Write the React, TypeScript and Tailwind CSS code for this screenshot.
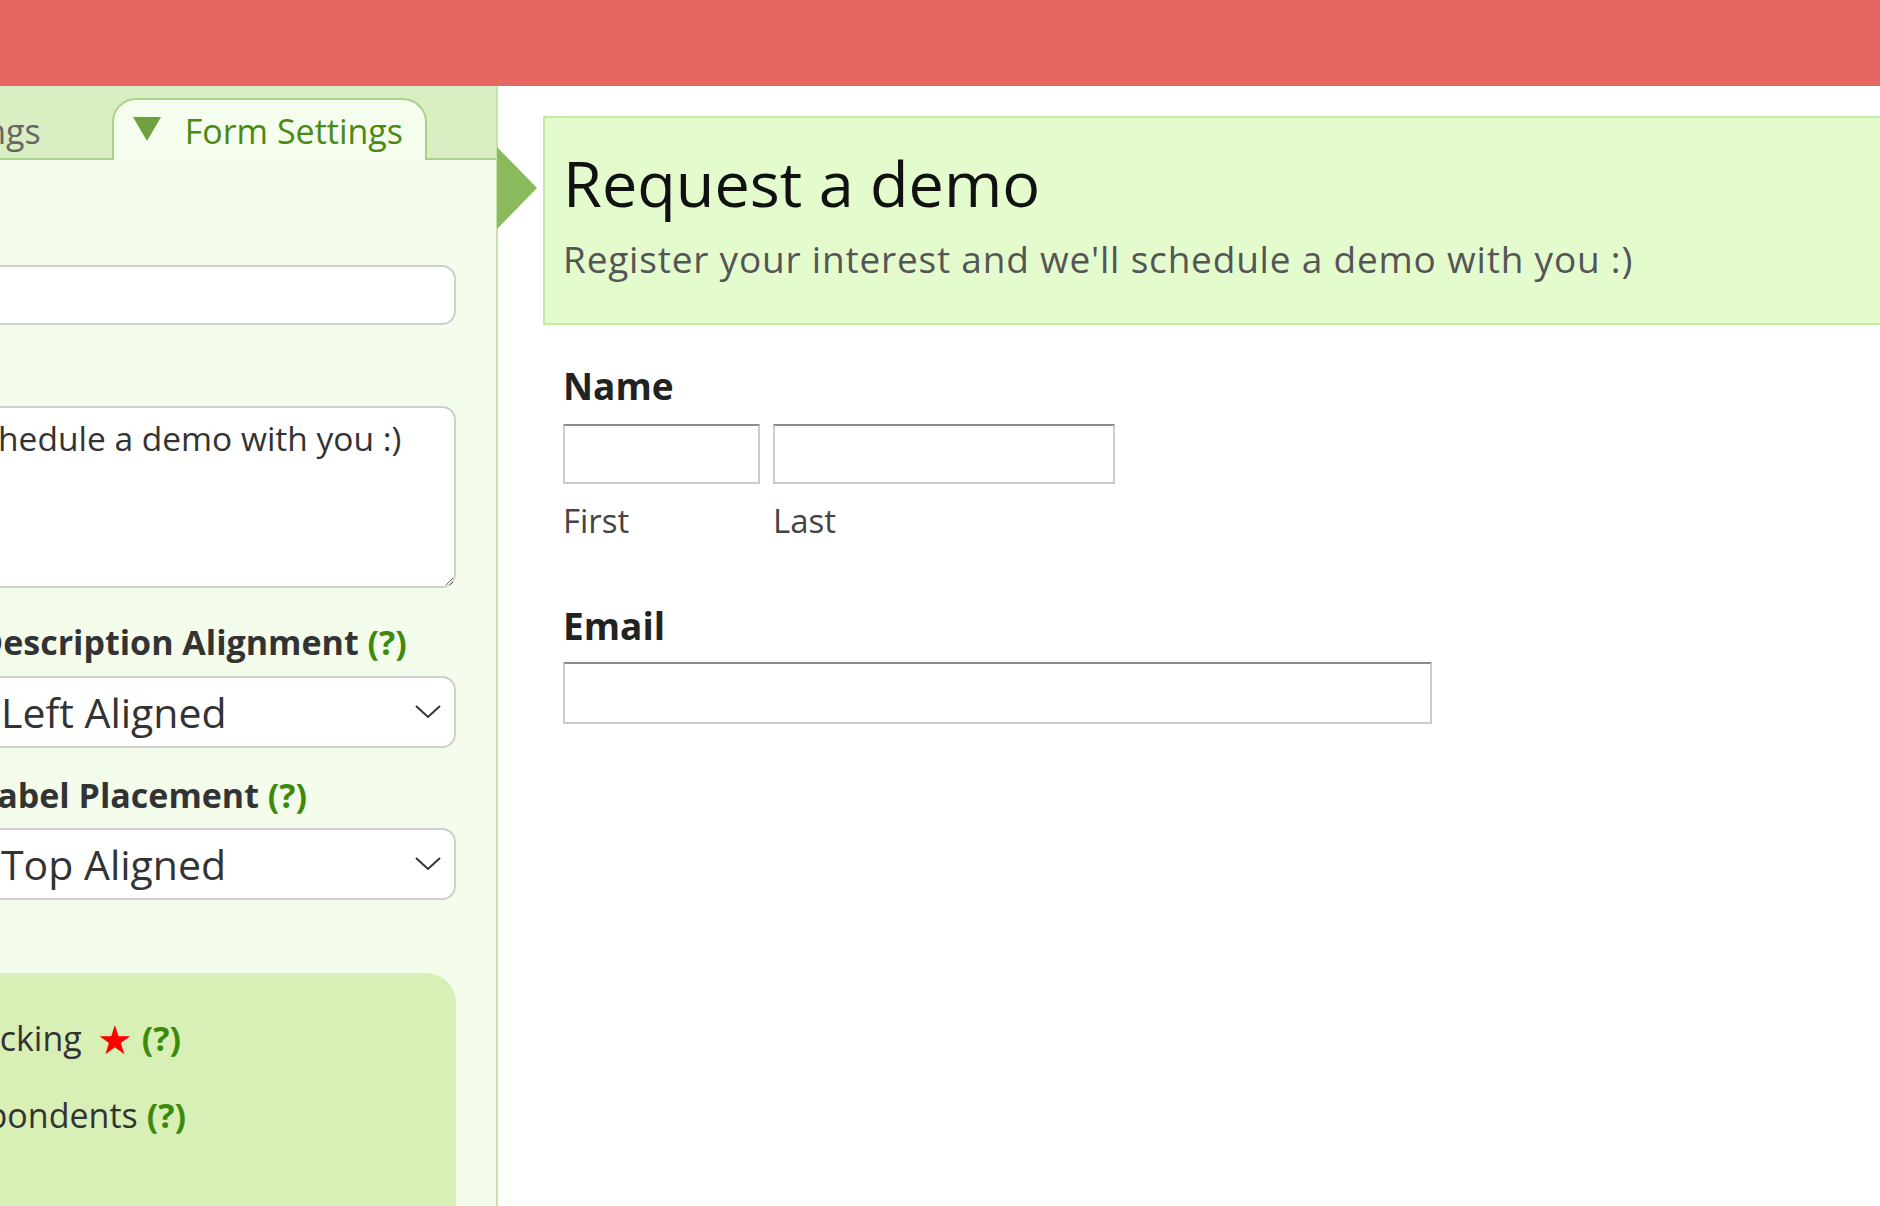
import React from 'react';

function Chevron() {
  return (
    <svg width="28" height="16" viewBox="0 0 28 16" fill="none" className="shrink-0">
      <polyline points="2,2 14,13 26,2" stroke="#333" strokeWidth="2" />
    </svg>
  );
}

function FakeSelect({ value }: { value: string }) {
  return (
    <div className="flex h-[72px] items-center justify-between rounded-[14px] border-2 border-[#cfcfcf] bg-white pl-[21px] pr-[12px] text-[41px] leading-none text-[#333]">
      <span className="whitespace-nowrap">{value}</span>
      <Chevron />
    </div>
  );
}

function Help() {
  return <span className="font-bold text-[#3D8A0A]">(?)</span>;
}

function FieldLabel({ children }: { children: React.ReactNode }) {
  return (
    <div className="h-[44px] whitespace-nowrap text-[34px] font-bold leading-[44px] text-[#333]">
      {children}
    </div>
  );
}

export default function App() {
  return (
    <div className="flex h-[1206px] w-full flex-col overflow-hidden bg-white font-['Open_Sans',sans-serif]">
      <div className="h-[86px] shrink-0 bg-[#E66661]" />

      <div className="flex min-h-0 flex-1">
        {/* settings panel */}
        <aside className="flex w-[498px] shrink-0 flex-col overflow-hidden border-r-2 border-[#C6E5A8] bg-[#F4FDEC]">
          <div className="flex h-[74px] shrink-0 items-end justify-end border-b-2 border-[#A9D38B] bg-[#D9EFC3] pr-[69px]">
            <div className="flex h-[58px] shrink-0 items-start whitespace-nowrap px-[22px] pt-[14px] text-[34px] leading-none text-[#666]">
              Add a Field
            </div>
            <div className="mr-[49px] flex h-[58px] shrink-0 items-start whitespace-nowrap px-[22px] pt-[14px] text-[34px] leading-none text-[#666]">
              Field Settings
            </div>
            <div className="-mb-[2px] flex h-[62px] shrink-0 items-start gap-[24px] whitespace-nowrap rounded-t-[24px] border-2 border-b-0 border-[#A9D38B] bg-[#F5FDEE] pl-[19px] pr-[22px] pt-[14px] text-[34px] leading-none text-[#4A8A12]">
              <svg width="28" height="24" viewBox="0 0 28 24" className="mt-[3px] shrink-0">
                <polygon points="0,0 28,0 14,24" fill="#6FA23F" />
              </svg>
              Form Settings
            </div>
          </div>

          <div className="-ml-[550px] mr-[40px] flex flex-col pt-[51px]">
            <FieldLabel>Title</FieldLabel>
            <input
              readOnly
              defaultValue="Request a demo"
              className="mt-[10px] h-[60px] rounded-[14px] border-2 border-[#cfcfcf] bg-white px-[24px] text-[33.5px] text-[#333] outline-none"
            />

            <div className="mt-[27px]">
              <FieldLabel>Description</FieldLabel>
            </div>
            <textarea
              readOnly
              defaultValue="Register your interest and we'll schedule a demo with you :)"
              className="mt-[10px] h-[182px] resize rounded-[14px] border-2 border-[#cfcfcf] bg-white px-[24px] pt-[10px] text-[33.5px] leading-[40px] text-[#333] outline-none"
            />

            <div className="mt-[32px] grid grid-cols-[1fr_478px] gap-x-[20px]">
              <div className="flex flex-col">
                <FieldLabel>
                  Language <Help />
                </FieldLabel>
                <div className="mt-[12px]">
                  <FakeSelect value="English" />
                </div>
              </div>
              <div className="flex flex-col">
                <FieldLabel>
                  Description Alignment <Help />
                </FieldLabel>
                <div className="mt-[12px]">
                  <FakeSelect value="Left Aligned" />
                </div>
                <div className="mt-[25px]">
                  <FieldLabel>
                    Label Placement <Help />
                  </FieldLabel>
                </div>
                <div className="mt-[11px]">
                  <FakeSelect value="Top Aligned" />
                </div>
              </div>
            </div>

            <div className="mt-[73px] flex h-[300px] flex-col gap-[26px] rounded-[30px] bg-[#D8F0B5] pt-[40px] text-[34px] text-[#333]">
              <div className="flex items-center justify-end whitespace-nowrap pr-[275px]">
                <input type="checkbox" className="mr-[12px] h-[26px] w-[26px]" />
                <span>Enable Conversion Tracking</span>
                <span className="ml-[15px] mr-[9px] text-[40px] leading-none text-[#FF0000]">★</span>
                <Help />
              </div>
              <div className="flex items-center justify-end whitespace-nowrap pr-[270px]">
                <input type="checkbox" className="mr-[12px] h-[26px] w-[26px]" />
                <span className="mr-[9px]">Send Confirmation to Respondents</span>
                <Help />
              </div>
            </div>
          </div>
        </aside>

        {/* form preview */}
        <div className="flex min-w-0 flex-1 items-start">
          <svg width="40" height="82" viewBox="0 0 40 82" className="-ml-[1px] mt-[61px] shrink-0">
            <polygon points="0,0 40,41 0,82" fill="#8BBA5C" />
          </svg>
          <main className="ml-[6px] flex min-w-0 flex-1 flex-col pt-[30px]">
            <header className="-mr-[20px] h-[209px] border-2 border-[#C3EBA2] bg-[#E4FCCD] pl-[18px] pt-[33px]">
              <h1 className="whitespace-nowrap text-[63px] leading-none text-[#111]">Request a demo</h1>
              <p className="mt-[26px] whitespace-nowrap text-[37px] leading-none tracking-[0.8px] text-[#555]">
                Register your interest and we'll schedule a demo with you :)
              </p>
            </header>

            <div className="flex flex-col pl-[20px]">
              <div className="mt-[42px] text-[37px] font-bold leading-none text-[#222]">Name</div>
              <div className="mt-[20px] flex gap-[13px]">
                <div className="flex flex-col">
                  <input className="h-[60px] w-[197px] border-2 border-[#cbcbcb] border-t-[#8c8c8c] bg-white outline-none" />
                  <span className="mt-[20px] text-[33px] leading-none text-[#444]">First</span>
                </div>
                <div className="flex flex-col">
                  <input className="h-[60px] w-[342px] border-2 border-[#cbcbcb] border-t-[#8c8c8c] bg-white outline-none" />
                  <span className="mt-[20px] text-[33px] leading-none text-[#444]">Last</span>
                </div>
              </div>

              <div className="mt-[70px] text-[37px] font-bold leading-none text-[#222]">Email</div>
              <input className="mt-[18px] h-[62px] w-[869px] border-2 border-[#cbcbcb] border-t-[#8c8c8c] bg-white outline-none" />
            </div>
          </main>
        </div>
      </div>
    </div>
  );
}
